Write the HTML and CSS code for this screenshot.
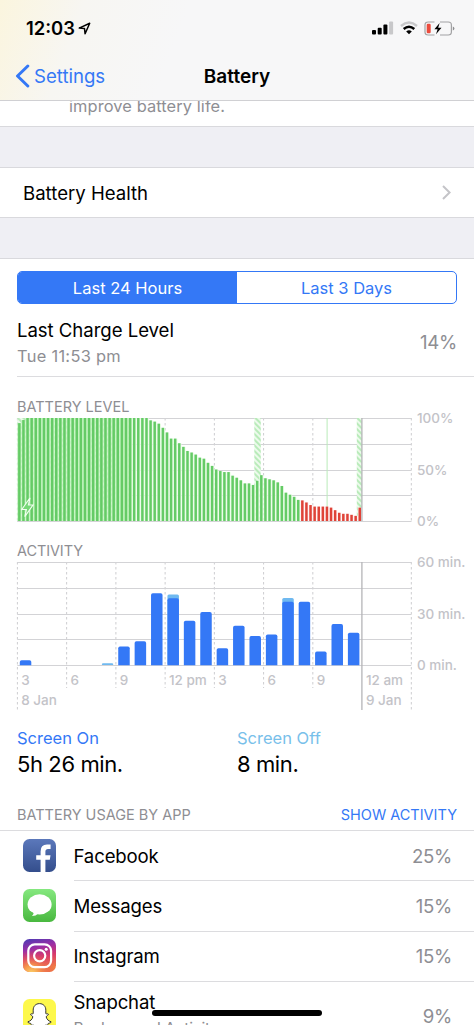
FILE: index.html
```html
<!DOCTYPE html>
<html lang="en">
<head>
	<meta charset="utf-8">
	<title>Battery</title>
	<link rel="stylesheet" href="styles.css">
</head>

<body>
	<header class="top">
		<div class="status">
			<span class="time">12:03</span>
			<svg class="loc" width="13" height="13" viewBox="0 0 13 13"><path d="M1.2 6.1L11.7 1.2L7.1 11.8L6.5 6.6Z" fill="none" stroke="#000" stroke-width="1.5" stroke-linejoin="round"/></svg>
			<svg class="signal" width="22" height="14" viewBox="0 0 22 14">
				<rect x="0" y="9" width="4" height="4.5" rx="1"/>
				<rect x="5.7" y="6.8" width="4" height="6.7" rx="1"/>
				<rect x="11.4" y="3.5" width="4" height="10" rx="1"/>
				<rect x="17.1" y="0.5" width="4" height="13" rx="1" fill="#c8c8ca"/>
			</svg>
			<svg class="wifi" width="18" height="14" viewBox="0 0 18 14" fill="none">
				<path d="M1 5Q9 -1.8 17 5" stroke="#c8c8ca" stroke-width="2.4"/>
				<path d="M3.7 8Q9 3.4 14.3 8" stroke="#000" stroke-width="2.4"/>
				<path d="M6.2 10.4Q9 8.2 11.8 10.4L9 13.2Z" fill="#000"/>
			</svg>
			<svg class="batt" width="31" height="15" viewBox="0 0 31 15">
				<path d="M10.5 1H4.2Q1 1 1 4V11Q1 14 4.2 14H10.5M16 1H24.2Q27.4 1 27.4 4V11Q27.4 14 24.2 14H16" fill="none" stroke="#a2a2a4" stroke-width="1.2"/>
				<path d="M28.8 5.4Q30.4 6 30.4 7.5T28.8 9.6Z" fill="#8e8e90"/>
				<rect x="2.7" y="2.7" width="4" height="9.6" rx="1.2" fill="#eb4b3d"/>
				<path d="M15.6 2L10.4 8.2H13.6L12 13.2L17.5 6.7H14.2Z"/>
			</svg>
		</div>
		<div class="nav">
			<a class="back">
				<svg width="15" height="24" viewBox="0 0 15 24"><path d="M12.8 2L2.5 12L12.8 22" fill="none" stroke="#3478f6" stroke-width="3" stroke-linecap="round" stroke-linejoin="round"/></svg>
				<span>Settings</span>
			</a>
			<h1>Battery</h1>
		</div>
	</header>

	<div class="hint"><span>improve battery life.</span></div>

	<div class="health">
		<span>Battery Health</span>
		<svg width="9" height="15" viewBox="0 0 9 15"><path d="M1 1L7.6 7.5L1 14" fill="none" stroke="#c4c4c8" stroke-width="2"/></svg>
	</div>

	<main>
		<div class="tabs">
			<div class="tab active"><span>Last 24 Hours</span></div>
			<div class="tab"><span>Last 3 Days</span></div>
		</div>

		<div class="charge">
			<div>
				<div class="charge-title">Last Charge Level</div>
				<div class="charge-time">Tue 11:53 pm</div>
			</div>
			<div class="charge-value">14%</div>
		</div>

		<h2 class="h-level">BATTERY LEVEL</h2>
		<svg id="level" class="chart" width="474" height="117" viewBox="0 412 474 117"></svg>
		<h2 class="h-activity">ACTIVITY</h2>
		<svg id="activity" class="chart" width="474" height="156" viewBox="0 558 474 156"></svg>

		<div class="totals">
			<div class="total">
				<div class="total-label on">Screen On</div>
				<div class="total-value">5h 26 min.</div>
			</div>
			<div class="total">
				<div class="total-label off">Screen Off</div>
				<div class="total-value">8 min.</div>
			</div>
		</div>

		<div class="usage-head">
			<h2>BATTERY USAGE BY APP</h2>
			<a>SHOW ACTIVITY</a>
		</div>

		<ul class="apps">
			<li>
				<svg class="icon" width="33" height="33" viewBox="0 0 33 33">
					<defs><linearGradient id="fb" x2="0" y2="1"><stop offset="0" stop-color="#5b78bb"/><stop offset="1" stop-color="#344e8c"/></linearGradient></defs>
					<rect width="33" height="33" rx="6.5" fill="url(#fb)"/>
					<path d="M17.6 33V20.7H13.2V16.2H17.6V12.4Q17.6 5.6 24 5.6H27.6V10H25Q22.4 10 22.4 12.6V16.2H27.5L26.8 20.7H22.4V33Z" fill="#fff"/>
				</svg>
				<div class="row"><span>Facebook</span><span class="pct">25%</span></div>
			</li>
			<li>
				<svg class="icon" width="33" height="33" viewBox="0 0 33 33">
					<defs><linearGradient id="msg" x2="0" y2="1"><stop offset="0" stop-color="#85e87f"/><stop offset="1" stop-color="#49b83f"/></linearGradient></defs>
					<rect width="33" height="33" rx="6.5" fill="url(#msg)"/>
					<ellipse cx="16.6" cy="15.4" rx="12" ry="10.2" fill="#fff"/>
					<path d="M10.5 22.5Q11.2 25 9 27Q13 27 15.2 24.5Z" fill="#fff"/>
				</svg>
				<div class="row"><span>Messages</span><span class="pct">15%</span></div>
			</li>
			<li>
				<svg class="icon" width="33" height="33" viewBox="0 0 33 33">
					<defs>
						<linearGradient id="ig1" x1="0" y1="0" x2="0.25" y2="1"><stop offset="0" stop-color="#493bb5"/><stop offset="0.35" stop-color="#9b2fa5"/><stop offset="0.65" stop-color="#d8396b"/><stop offset="1" stop-color="#f07a45"/></linearGradient>
						<radialGradient id="ig2" cx="0.25" cy="1.05" r="0.7"><stop offset="0" stop-color="#fbd46a"/><stop offset="0.35" stop-color="#f6994c"/><stop offset="1" stop-color="#e0445c" stop-opacity="0"/></radialGradient>
					</defs>
					<rect width="33" height="33" rx="6.5" fill="url(#ig1)"/>
					<rect width="33" height="33" rx="6.5" fill="url(#ig2)"/>
					<g fill="none" stroke="#fff" stroke-width="2.2">
						<rect x="5.3" y="5.3" width="22.8" height="22.8" rx="6.5"/>
						<circle cx="16.7" cy="16.7" r="5.6"/>
					</g>
					<circle cx="23.2" cy="10.3" r="1.5" fill="#fff"/>
				</svg>
				<div class="row"><span>Instagram</span><span class="pct">15%</span></div>
			</li>
			<li class="tall">
				<svg class="icon" width="33" height="33" viewBox="0 0 33 33">
					<rect width="33" height="33" rx="6.5" fill="#fdf84b"/>
					<path d="M16.5 4.6C12.5 4.6 10.1 7.6 10.2 11.2V14.6C9.3 15.2 8.2 14.3 7.6 15.2C7.2 16.2 9.7 16.6 9.8 17.9C9.4 20.2 7.5 22 4.9 22.8C4.7 24.2 7.4 24 7.9 24.6C8.2 25.2 8.1 26 8.8 26.2C11.8 25.6 12.8 28.4 16.5 28.4S21.2 25.6 24.2 26.2C24.9 26 24.8 25.2 25.1 24.6C25.6 24 28.3 24.2 28.1 22.8C25.5 22 23.6 20.2 23.2 17.9C23.3 16.6 25.8 16.2 25.4 15.2C24.8 14.3 23.7 15.2 22.8 14.6V11.2C22.9 7.6 20.5 4.6 16.5 4.6Z" fill="#fff" stroke="#333" stroke-width="1"/>
				</svg>
				<div class="row">
					<div><div class="name">Snapchat</div><div class="sub">Background Activity</div></div>
					<span class="pct">9%</span>
				</div>
			</li>
		</ul>
	</main>

	<div class="home-bar"></div>

	<script src="charts.js"></script>
</body>
</html>
```
FILE: styles.css
```css
* {
	box-sizing: border-box;
}

body {
	margin: 0;
	width: 474px;
	height: 1025px;
	overflow: hidden;
	position: relative;
	background: #efeff4;
	color: #000;
	font-family: Inter, "Liberation Sans", sans-serif;
	font-size: 18.6px;
	letter-spacing: 0;
}

h1, h2, ul {
	margin: 0;
	padding: 0;
	font-weight: normal;
}

.top {
	height: 101px;
	background: linear-gradient(110deg, #fbf5de 0, #f7f6f2 80px, #f7f7f8 180px);
	border-bottom: 1px solid #d0d0d3;
}

.status {
	display: flex;
	align-items: center;
	height: 56px;
	padding: 0 19px 0 26px;
}

.time {
	font-size: 18.4px;
	font-weight: 600;
}

.loc {
	margin-left: 3px;
}

.signal {
	margin-left: auto;
}

.wifi {
	margin: 0 6px;
}

.nav {
	display: grid;
	grid-template-columns: 1fr auto 1fr;
	align-items: center;
	height: 40px;
	padding: 0 15px;
}

.nav h1 {
	font-size: 19px;
	font-weight: 600;
}

.back {
	display: flex;
	align-items: center;
	gap: 4px;
}

.nav a,
.usage-head a {
	color: #3478f6;
}

.hint {
	height: 26px;
	padding-left: 69px;
	background: #fff;
	border-bottom: 1px solid #d9d9dd;
	color: #8e8e93;
	font-size: 16.4px;
	letter-spacing: 0.1px;
	line-height: 10px;
	overflow: hidden;
}

.health {
	display: flex;
	align-items: center;
	justify-content: space-between;
	height: 51px;
	margin: 40px 0;
	padding: 0 23px;
	background: #fff;
	border-top: 1px solid #d9d9dd;
	border-bottom: 1px solid #d9d9dd;
}

main {
	background: #fff;
	border-top: 1px solid #d9d9dd;
}

.tabs {
	display: flex;
	height: 33px;
	margin: 12px 17px 0;
	border: 1px solid #3478f6;
	border-radius: 5px;
	overflow: hidden;
	color: #3478f6;
	font-size: 16.5px;
}

.tab {
	flex: 1;
	display: flex;
	align-items: center;
	justify-content: center;
}

.tab.active {
	background: #3478f6;
	color: #fff;
}

.charge {
	display: flex;
	align-items: center;
	justify-content: space-between;
	height: 73px;
	margin-left: 17px;
	padding: 4px 17px 0 0;
	border-bottom: 1px solid #dcdcdf;
}

.charge-title {
	letter-spacing: -0.05px;
	line-height: 27px;
}

.charge-time {
	color: #8e8e93;
	font-size: 16.4px;
	letter-spacing: 0.3px;
	line-height: 25px;
	margin-bottom: -1px;
}

.charge-value,
.pct {
	color: #8e8e93;
	letter-spacing: -0.3px;
}

h2 {
	color: #8e8e93;
	font-size: 14.5px;
}

.h-level {
	height: 35px;
	padding: 20px 0 0 17px;
	line-height: 20px;
}

.h-activity {
	height: 29px;
	padding: 12px 0 0 17px;
	line-height: 20px;
	letter-spacing: -0.1px;
}

.chart {
	display: block;
	overflow: visible;
}

.chart text {
	fill: #c3c3c8;
	font-size: 13.5px;
	font-weight: 500;
}

.grid {
	stroke: #d3d3d6;
}

.dash {
	stroke: #cdcdd0;
	stroke-dasharray: 2.5 2.5;
}

.now {
	stroke: #b4b4b7;
	stroke-width: 1.3;
}

.totals {
	display: flex;
	height: 84px;
	padding: 12px 17px 0;
}

.total {
	flex: 1;
}

.total-label {
	font-size: 16.5px;
	line-height: 24px;
}

.on {
	color: #3478f6;
}

.off {
	color: #78c0ea;
}

.total-value {
	font-size: 22px;
	letter-spacing: -0.4px;
	line-height: 28px;
}

.usage-head {
	display: flex;
	justify-content: space-between;
	align-items: center;
	height: 33px;
	padding: 1px 17px 0;
	border-bottom: 1px solid #dcdcdf;
	font-size: 14.5px;
}

.apps {
	list-style: none;
}

.apps li {
	display: flex;
	height: 50.3px;
	padding-left: 23px;
}

.icon {
	margin-top: 7.5px;
}

.row {
	flex: 1;
	display: flex;
	align-items: center;
	justify-content: space-between;
	margin-left: 17.5px;
	padding-right: 22px;
	border-bottom: 1px solid #dcdcdf;
	letter-spacing: -0.15px;
}

.apps .tall {
	height: 70px;
}

.tall .icon {
	margin-top: 17px;
}

.name {
	line-height: 27px;
}

.sub {
	color: #8e8e93;
	font-size: 15.6px;
	line-height: 26px;
	margin-bottom: 2px;
}

.home-bar {
	position: absolute;
	left: 152px;
	top: 1010px;
	width: 170px;
	height: 6px;
	border-radius: 3px;
	background: #000;
}
```
FILE: charts.js
```js
var NS = "http://www.w3.org/2000/svg",
	LEFT = 17.4,
	RIGHT = 411.3,
	NOW = 361.9,
	HEIGHT = 103;

// one value per 15 minutes, in percent
var levels = [95, 98];
while (levels.length < 32) levels.push(100);
levels = levels.concat([
	97.7, 96.5, 94.5, 90.5, 86, 80, 80, 75.5,
	72, 68, 66.5, 64.5, 61.5, 60.5, 56.5, 53.5, 50, 48.5, 47.5, 47.5,
	44, 42, 39.5, 36.5, 36.5, 35, 39, 44.5, 41.5, 40.5, 39.5, 37.5,
	34, 27.5, 25.5, 23.5, 20.5, 20, 18, 15.5, 14, 14, 14, 14,
	13, 10.5, 8, 7, 7, 6, 5, 13
]);

// minutes per hour: [screen on, screen off]
var minutes = [
	[3, 0], [0, 0], [0, 0], [0, 0], [0, 0], [0, 1], [11, 0], [14, 0],
	[42, 0], [39, 2], [26, 0], [31, 0], [10, 0], [23, 0], [17, 0], [18, 0],
	[37, 2], [37, 0], [8, 0], [24, 0], [19, 0]
];

function add(parent, name, attrs, text) {
	var el = document.createElementNS(NS, name);
	for (var key in attrs) el.setAttribute(key, attrs[key]);
	if (text) el.textContent = text;
	parent.appendChild(el);
	return el;
}

function line(svg, cls, x1, y1, x2, y2) {
	add(svg, "line", { "class": cls, x1: x1, y1: y1, x2: x2, y2: y2 });
}

function rect(svg, x, y, w, h, fill, rx) {
	add(svg, "rect", { x: x, y: y, width: w, height: h, fill: fill, rx: rx || 0 });
}

function drawGrid(svg, top) {
	for (var i = 0; i < 5; i++) {
		var y = Math.round(top + HEIGHT * i / 4) + 0.5;
		line(svg, "grid", LEFT, y, RIGHT, y);
	}
}

function drawLevel() {
	var svg = document.getElementById("level"),
		top = 418,
		bottom = top + HEIGHT,
		step = (NOW - LEFT) / levels.length;

	var defs = add(svg, "defs", {}),
		hatch = add(defs, "pattern", { id: "hatch", width: 4, height: 4, patternUnits: "userSpaceOnUse", patternTransform: "rotate(-45)" });
	rect(hatch, 0, 0, 4, 4, "#ecfaeb");
	rect(hatch, 0, 0, 2, 4, "#b9ebba");

	for (var i = 0; i <= 8; i++) {
		var x = LEFT + i * 49.24;
		if (i !== 7) line(svg, "dash", x, top, x, bottom);
	}
	drawGrid(svg, top);

	// charging periods
	rect(svg, LEFT, top, 114, HEIGHT, "url(#hatch)");
	rect(svg, 254.3, top, 6.5, HEIGHT, "url(#hatch)");
	rect(svg, 326.6, top, 1, HEIGHT, "#b9ebba");
	rect(svg, 356.8, top, 5, HEIGHT, "url(#hatch)");

	levels.forEach(function(level, i) {
		var h = level * HEIGHT / 100,
			x = LEFT + i * step,
			low = i >= 69;
		rect(svg, x, bottom - h, step, h, low ? "#fff4f3" : i < 28 ? "#c6f5c2" : "#e9fce6");
		rect(svg, x + 0.7, bottom - h, 2.5, h, low ? "#df4338" : "#65cb66");
	});

	line(svg, "now", NOW, top, NOW, bottom);
	line(svg, "grid", LEFT, bottom + 0.5, RIGHT, bottom + 0.5);
	add(svg, "path", { d: "M30 497.8L21.8 509.5H26.4L24.8 516.6L33 505H28.4Z", fill: "#77d877", stroke: "#f2fff0", "stroke-width": 1.1 });

	add(svg, "text", { x: 417, y: 423 }, "100%");
	add(svg, "text", { x: 417, y: 474.5 }, "50%");
	add(svg, "text", { x: 417, y: 526 }, "0%");
}

function drawActivity() {
	var svg = document.getElementById("activity"),
		top = 562,
		bottom = top + HEIGHT,
		step = (NOW - LEFT) / minutes.length,
		hours = ["3", "6", "9", "12 pm", "3", "6", "9", "12 am"];

	for (var i = 0; i <= 8; i++) {
		var x = LEFT + i * 49.24,
			end = i === 0 || i === 8 ? 710 : 688;
		if (i !== 7) line(svg, "dash", x, top, x, end);
		if (hours[i]) add(svg, "text", { x: x + 3.8, y: 684.5 }, hours[i]);
	}
	drawGrid(svg, top);
	line(svg, "now", NOW, top, NOW, 710);

	minutes.forEach(function(m, i) {
		var on = m[0] * HEIGHT / 60,
			all = (m[0] + m[1]) * HEIGHT / 60,
			x = LEFT + i * step + 2.4;
		if (m[1]) rect(svg, x, bottom - all, 11.5, all, "#6fb9f0", 1.5);
		if (m[0]) add(svg, "path", {
			d: "M" + x + " " + (bottom + 0.3) + "v" + (1.8 - on) + "q0 -1.8 1.8 -1.8h7.9q1.8 0 1.8 1.8v" + (on - 1.8) + "z",
			fill: "#3478f6"
		});
	});

	add(svg, "text", { x: 21.2, y: 705.3 }, "8 Jan");
	add(svg, "text", { x: 365.9, y: 705.3 }, "9 Jan");
	add(svg, "text", { x: 417, y: 567.4 }, "60 min.");
	add(svg, "text", { x: 417, y: 618.9 }, "30 min.");
	add(svg, "text", { x: 417, y: 670.4 }, "0 min.");
}

drawLevel();
drawActivity();
```
